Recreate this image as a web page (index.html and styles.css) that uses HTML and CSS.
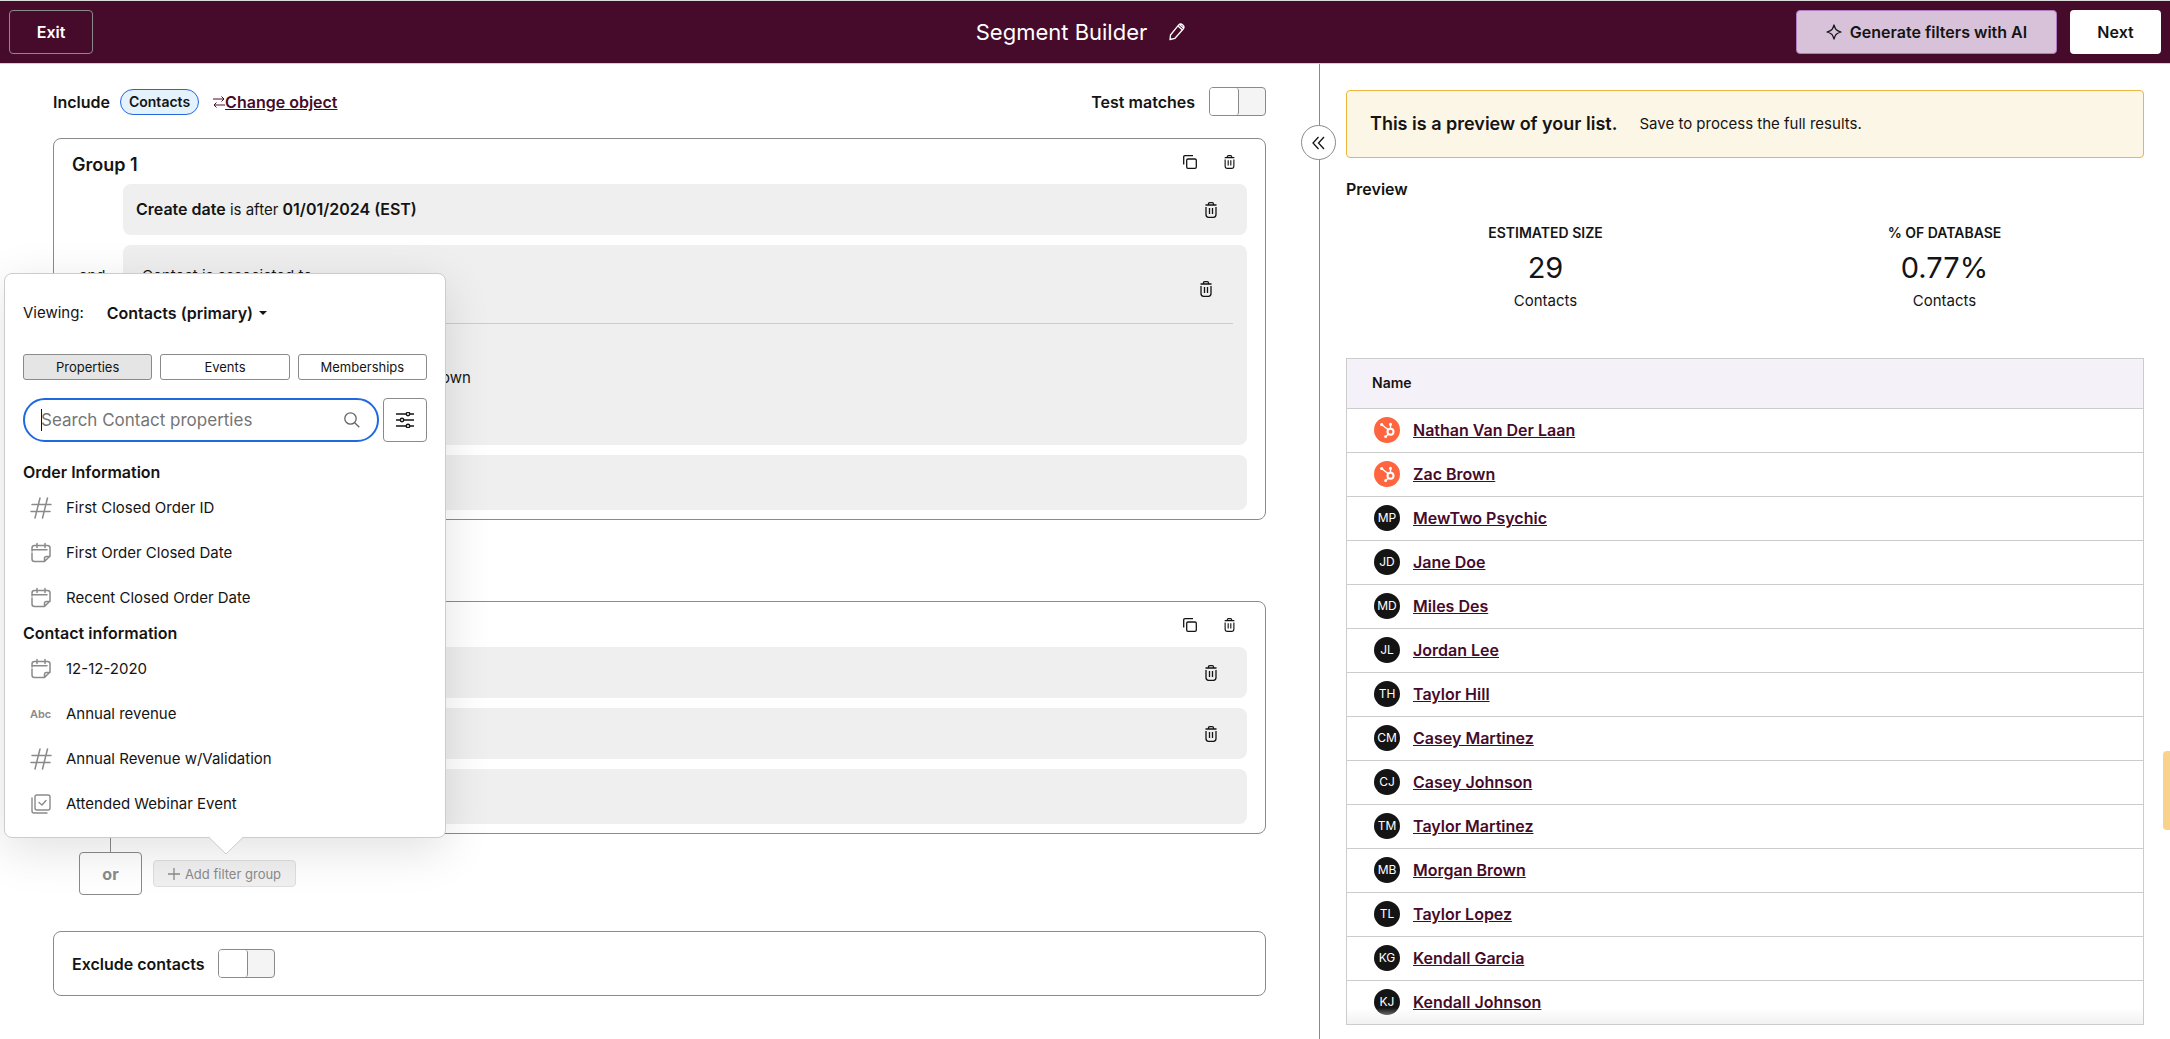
FILE: index.html
```html
<!DOCTYPE html>
<html lang="en">
<head>
<meta charset="utf-8">
<meta name="viewport" content="width=device-width, initial-scale=1">
<title>Segment Builder</title>
<link rel="stylesheet" href="styles.css">
</head>
<body>
<svg class="sprite" aria-hidden="true">
  <symbol id="i-trash" viewBox="0 0 12 16"><path d="M0.5 3H11.500M3.500 3V2Q3.500 0.700 4.800 0.700H7.200Q8.500 0.700 8.500 2V3M1 5V12.500Q1 15.300 3.500 15.300H8.500Q11 15.300 11 12.500V5M4.500 6V12M7.500 6V12" fill="none" stroke="currentColor" stroke-width="1.300"/></symbol>
  <symbol id="i-copy" viewBox="0 0 14 14"><path d="M0.700 9.500V2Q0.700 0.700 2 0.700H10M5 4H12Q13.300 4 13.300 5.300V12Q13.300 13.300 12 13.300H5Q3.700 13.300 3.700 12V5.300Q3.700 4 5 4Z" fill="none" stroke="currentColor" stroke-width="1.300"/></symbol>
  <symbol id="i-hash" viewBox="0 0 22 22"><path d="M2 7.500H21M1 14.500H20M10 1L5 21M17.500 1L12.500 21" fill="none" stroke="currentColor" stroke-width="1.500" stroke-linecap="round"/></symbol>
  <symbol id="i-date" viewBox="0 0 22 22"><path d="M2 9V6Q2 3.500 4.500 3.500H17.500Q20 3.500 20 6V14L14.500 19.500M2 11V17Q2 19.500 4.500 19.500H14.500V16.500Q14.500 14.500 16.500 14.500H20M2 7.800H17M7 1.500V5.500M15 1.500V5.500" fill="none" stroke="currentColor" stroke-width="1.500" stroke-linecap="round" stroke-linejoin="round"/></symbol>
  <symbol id="i-check" viewBox="0 0 22 22"><path d="M7 2H18Q20 2 20 4V15Q20 17 18 17H7Q5 17 5 15V4Q5 2 7 2ZM2 5V18Q2 20 4 20H17M9 9.500L12 12L16 7.500" fill="none" stroke="currentColor" stroke-width="1.400" stroke-linecap="round" stroke-linejoin="round"/></symbol>
  <symbol id="i-hub" viewBox="0 0 26 26"><g fill="none" stroke="#fff" stroke-width="1.400"><circle cx="16.500" cy="14.800" r="3" stroke-width="2"/><path d="M16.500 11.500V7.500M14 12.500L7.500 7.500M14.300 17L12 19.500"/></g><g fill="#fff"><circle cx="16.500" cy="7.300" r="1.500"/><circle cx="7.700" cy="7.500" r="1.600"/><circle cx="11.600" cy="19.700" r="1.400"/></g></symbol>
</svg>

<header class="topbar">
  <button class="btn btn-exit" type="button">Exit</button>
  <div class="title">
    <h1>Segment Builder</h1>
    <button class="icon-btn" type="button" aria-label="Rename">
      <svg width="16" height="18" viewBox="0 0 16 18"><path d="M1 16.500L1.500 12L9.500 2.200Q11.500 0 13.800 2Q16 4 14.200 6L6 15.300ZM9 3L13.500 7M11 2L14.500 5" fill="none" stroke="currentColor" stroke-width="1.300" stroke-linejoin="round"/></svg>
    </button>
  </div>
  <div class="actions">
    <button class="btn btn-ai" type="button">
      <svg width="16" height="16" viewBox="0 0 16 16"><path d="M8 1Q8.800 3.800 10 5.500Q11.500 7 15 8Q11.500 9 10 10.500Q8.800 12.200 8 15Q7.200 12.200 6 10.500Q4.500 9 1 8Q4.500 7 6 5.500Q7.200 3.800 8 1Z" fill="none" stroke="currentColor" stroke-width="1.300" stroke-linejoin="round"/></svg>
      Generate filters with AI
    </button>
    <button class="btn btn-next" type="button">Next</button>
  </div>
</header>

<main class="layout">
  <section class="builder">
    <div class="toolbar">
      <span class="strong">Include</span>
      <span class="pill">Contacts</span>
      <a class="change" href="#object"><svg width="12" height="12" viewBox="0 0 12 12"><path d="M0 3H11M8.500 0.500L11 3L8.500 5.500M12 9H1M3.500 6.500L1 9L3.500 11.500" fill="none" stroke="currentColor"/></svg><span>Change object</span></a>
      <label class="test">Test matches <input class="toggle" type="checkbox"></label>
    </div>

    <section class="group">
      <div class="group-head">
        <h2>Group 1</h2>
        <button class="icon-btn" type="button" aria-label="Clone group"><svg width="14" height="14"><use href="#i-copy"/></svg></button>
        <button class="icon-btn" type="button" aria-label="Delete group"><svg width="11" height="14"><use href="#i-trash"/></svg></button>
      </div>
      <div class="line">
        <div class="rule">
          <p><b>Create date</b> is after <b>01/01/2024 (EST)</b></p>
          <button class="icon-btn" type="button" aria-label="Delete filter"><svg width="12" height="16"><use href="#i-trash"/></svg></button>
        </div>
      </div>
      <div class="line">
        <span class="joiner">and</span>
        <div class="assoc">
          <div class="assoc-head">
            <p>Contact is associated to:</p>
            <button class="icon-btn" type="button" aria-label="Delete association"><svg width="12" height="16"><use href="#i-trash"/></svg></button>
          </div>
          <p class="assoc-value">own</p>
        </div>
      </div>
      <div class="line"><div class="add-area"></div></div>
    </section>

    <section class="group group-second">
      <div class="group-head">
        <button class="icon-btn" type="button" aria-label="Clone group"><svg width="14" height="14"><use href="#i-copy"/></svg></button>
        <button class="icon-btn" type="button" aria-label="Delete group"><svg width="11" height="14"><use href="#i-trash"/></svg></button>
      </div>
      <div class="line"><div class="rule"><button class="icon-btn" type="button" aria-label="Delete filter"><svg width="12" height="16"><use href="#i-trash"/></svg></button></div></div>
      <div class="line"><div class="rule"><button class="icon-btn" type="button" aria-label="Delete filter"><svg width="12" height="16"><use href="#i-trash"/></svg></button></div></div>
      <div class="line"><div class="add-area"></div></div>
    </section>

    <div class="or-row">
      <span class="or">or</span>
      <div class="add-wrap">
        <button class="btn-add" type="button" disabled>
          <svg width="12" height="12" viewBox="0 0 12 12"><path d="M6 0V12M0 6H12" stroke="currentColor" stroke-width="1.300"/></svg>
          Add filter group
        </button>

        <div class="popover" role="dialog" aria-label="Choose a property">
          <div class="viewing">
            <label for="object">Viewing:</label>
            <span class="select">
              <select id="object"><option>Contacts (primary)</option></select>
              <svg width="8" height="4" viewBox="0 0 8 4"><path d="M0 0H8L4 4Z" fill="currentColor"/></svg>
            </span>
          </div>
          <div class="tabs">
            <button class="tab active" type="button">Properties</button>
            <button class="tab" type="button">Events</button>
            <button class="tab" type="button">Memberships</button>
          </div>
          <div class="search-row">
            <div class="search">
              <span class="caret"></span>
              <input type="text" aria-label="Search Contact properties" placeholder="Search Contact properties">
              <svg width="16" height="16" viewBox="0 0 16 16"><circle cx="6.500" cy="6.500" r="5.700" fill="none" stroke="currentColor" stroke-width="1.300"/><path d="M10.700 10.700L15.300 15.300" stroke="currentColor" stroke-width="1.300"/></svg>
            </div>
            <button class="filter-btn" type="button" aria-label="Filter properties">
              <svg width="18" height="16" viewBox="0 0 18 16"><g fill="none" stroke="currentColor" stroke-width="1.400"><path d="M0 2H10M14 2H18M0 8H4M8 8H18M0 14H10M14 14H18"/><circle cx="12" cy="2" r="1.700"/><circle cx="6" cy="8" r="1.700"/><circle cx="12" cy="14" r="1.700"/></g></svg>
            </button>
          </div>
          <h3>Order Information</h3>
          <ul>
            <li><svg width="22" height="22"><use href="#i-hash"/></svg>First Closed Order ID</li>
            <li><svg width="22" height="22"><use href="#i-date"/></svg>First Order Closed Date</li>
            <li><svg width="22" height="22"><use href="#i-date"/></svg>Recent Closed Order Date</li>
          </ul>
          <h3>Contact information</h3>
          <ul>
            <li><svg width="22" height="22"><use href="#i-date"/></svg>12-12-2020</li>
            <li><span class="abc">Abc</span>Annual revenue</li>
            <li><svg width="22" height="22"><use href="#i-hash"/></svg>Annual Revenue w/Validation</li>
            <li><svg width="22" height="22"><use href="#i-check"/></svg>Attended Webinar Event</li>
          </ul>
          <svg class="arrow" width="34" height="18" viewBox="0 0 34 18"><path d="M0 0L17 17L34 0Z" fill="#fff"/><path d="M0 0.500L17 17L34 0.500" fill="none" stroke="#cccccc"/></svg>
        </div>
      </div>
    </div>

    <label class="exclude">Exclude contacts <input class="toggle" type="checkbox"></label>
  </section>

  <section class="preview">
    <button class="collapse" type="button" aria-label="Expand preview">
      <svg width="13" height="14" viewBox="0 0 13 14"><path d="M6.500 1L1 7L6.500 13M12 1L6.500 7L12 13" fill="none" stroke="currentColor" stroke-width="1.300"/></svg>
    </button>
    <div class="notice"><strong>This is a preview of your list.</strong><span>Save to process the full results.</span></div>
    <h2 class="preview-title">Preview</h2>
    <div class="stats">
      <div class="stat"><h3>ESTIMATED SIZE</h3><p class="num">29</p><p>Contacts</p></div>
      <div class="stat"><h3>% OF DATABASE</h3><p class="num">0.77%</p><p>Contacts</p></div>
    </div>
    <div class="table-wrap">
      <table>
        <thead><tr><th scope="col">Name</th></tr></thead>
        <tbody>
          <tr><td><div class="person"><span class="avatar hub"><svg width="26" height="26"><use href="#i-hub"/></svg></span><a href="#c1">Nathan Van Der Laan</a></div></td></tr>
          <tr><td><div class="person"><span class="avatar hub"><svg width="26" height="26"><use href="#i-hub"/></svg></span><a href="#c2">Zac Brown</a></div></td></tr>
          <tr><td><div class="person"><span class="avatar">MP</span><a href="#c3">MewTwo Psychic</a></div></td></tr>
          <tr><td><div class="person"><span class="avatar">JD</span><a href="#c4">Jane Doe</a></div></td></tr>
          <tr><td><div class="person"><span class="avatar">MD</span><a href="#c5">Miles Des</a></div></td></tr>
          <tr><td><div class="person"><span class="avatar">JL</span><a href="#c6">Jordan Lee</a></div></td></tr>
          <tr><td><div class="person"><span class="avatar">TH</span><a href="#c7">Taylor Hill</a></div></td></tr>
          <tr><td><div class="person"><span class="avatar">CM</span><a href="#c8">Casey Martinez</a></div></td></tr>
          <tr><td><div class="person"><span class="avatar">CJ</span><a href="#c9">Casey Johnson</a></div></td></tr>
          <tr><td><div class="person"><span class="avatar">TM</span><a href="#c10">Taylor Martinez</a></div></td></tr>
          <tr><td><div class="person"><span class="avatar">MB</span><a href="#c11">Morgan Brown</a></div></td></tr>
          <tr><td><div class="person"><span class="avatar">TL</span><a href="#c12">Taylor Lopez</a></div></td></tr>
          <tr><td><div class="person"><span class="avatar">KG</span><a href="#c13">Kendall Garcia</a></div></td></tr>
          <tr><td><div class="person"><span class="avatar">KJ</span><a href="#c14">Kendall Johnson</a></div></td></tr>
        </tbody>
      </table>
    </div>
  </section>
</main>
<div class="side-tab"></div>
</body>
</html>
```
FILE: styles.css
```css
* { box-sizing: border-box; }

body {
  margin: 0;
  min-height: 100vh;
  display: flex;
  flex-direction: column;
  background: #fff;
  color: #141414;
  font: 15px/20px Inter, "Liberation Sans", sans-serif;
}

h1, h2, h3, p, ul { margin: 0; padding: 0; }
button, input, select { font: inherit; color: inherit; }
svg { display: block; flex: none; }
.sprite { position: absolute; width: 0; height: 0; }

.icon-btn {
  display: flex;
  padding: 0;
  border: 0;
  background: none;
}

.strong, b { font-size: 16px; font-weight: 600; }

/* Top bar */
.topbar {
  display: grid;
  grid-template-columns: 1fr auto 1fr;
  align-items: center;
  height: 64px;
  padding: 0 9px;
  border-top: 1px solid #dcdcdc;
  border-bottom: 1px solid #d8ccd3;
  background: #460b2a;
  color: #fff;
}

.btn {
  display: flex;
  align-items: center;
  justify-content: center;
  gap: 8px;
  height: 44px;
  padding: 0;
  border: 1px solid transparent;
  border-radius: 4px;
  font-size: 16px;
  font-weight: 600;
}

.btn-exit {
  width: 84px;
  border-color: #8a8a8a;
  background: transparent;
}

.title {
  display: flex;
  align-items: center;
  gap: 22px;
  padding-right: 9px;
}

.title h1 {
  font-size: 22px;
  line-height: 28px;
  font-weight: 400;
}

.actions {
  display: flex;
  justify-content: flex-end;
  gap: 13px;
}

.btn-ai {
  width: 261px;
  border-color: #b07cc0;
  background: #d7c2d9;
  color: #141414;
}

.btn-next {
  width: 91px;
  background: #fff;
  color: #141414;
}

/* Page columns */
.layout {
  flex: 1;
  display: grid;
  grid-template-columns: 1319fr 851fr;
}

.builder { padding: 23px 53px 40px; }

.toolbar {
  display: flex;
  align-items: center;
  height: 29px;
  margin-bottom: 22px;
}

.pill {
  height: 26px;
  margin: 0 14px 0 10px;
  padding: 0 8px;
  border: 1px solid #2567df;
  border-radius: 13px;
  background: #e3f2fb;
  font-size: 14px;
  line-height: 24px;
  font-weight: 600;
}

.change {
  display: flex;
  align-items: center;
  color: #460b2a;
  font-size: 16px;
  font-weight: 600;
  text-decoration: none;
}

.change span { text-decoration: underline; }

.test {
  display: flex;
  align-items: center;
  gap: 14px;
  margin-left: auto;
  font-size: 16px;
  font-weight: 600;
}

.toggle {
  appearance: none;
  width: 57px;
  height: 29px;
  margin: 0;
  border: 1px solid #8a8a8a;
  border-radius: 4px;
  background: #f4f4f4;
}

.toggle::before {
  content: "";
  display: block;
  width: 28px;
  height: 27px;
  border-right: 1px solid #8a8a8a;
  border-radius: 3px;
  background: #fff;
}

/* Filter groups */
.group {
  display: flex;
  flex-direction: column;
  gap: 10px;
  padding: 0 18px 9px 0;
  border: 1px solid #8a8a8a;
  border-radius: 8px;
}

.group-second { margin-top: 81px; }

.group-head {
  display: flex;
  align-items: center;
  justify-content: flex-end;
  gap: 27px;
  height: 45px;
  margin-bottom: -10px;
  padding: 0 12px 0 18px;
}

.group-head h2 {
  margin-right: auto;
  padding-top: 6px;
  font-size: 18px;
  line-height: 22px;
  font-weight: 600;
}

.line {
  display: flex;
  justify-content: flex-end;
}

.joiner {
  flex: 1;
  padding: 21px 0 0 25px;
}

.rule, .assoc, .add-area {
  width: calc(100% - 69px);
  border-radius: 8px;
  background: #efefef;
}

.rule {
  display: flex;
  align-items: center;
  height: 51px;
  padding: 0 30px 0 13px;
}

.rule .icon-btn { margin-left: auto; }

.assoc {
  height: 200px;
  padding: 0 14px 0 19px;
}

.assoc-head {
  display: flex;
  align-items: center;
  justify-content: space-between;
  height: 79px;
  padding: 10px 21px 0 0;
  border-bottom: 1px solid #cccccc;
}

.assoc-head p {
  align-self: flex-start;
  padding-top: 11px;
}

.assoc-value { padding: 44px 0 0 299px; }

.add-area { height: 55px; }

/* Or row */
.or-row {
  display: flex;
  align-items: center;
  gap: 11px;
  margin: 18px 0 36px 26px;
}

.or {
  position: relative;
  width: 63px;
  height: 43px;
  border: 1px solid #8a8a8a;
  border-radius: 4px;
  color: #8a8a8a;
  font-size: 16px;
  line-height: 42px;
  font-weight: 700;
  text-align: center;
}

.or::before {
  content: "";
  position: absolute;
  left: 30px;
  bottom: 100%;
  height: 18px;
  border-left: 1px solid #8a8a8a;
}

.add-wrap { position: relative; }

.btn-add {
  display: flex;
  align-items: center;
  justify-content: center;
  gap: 5px;
  width: 143px;
  height: 27px;
  padding: 0;
  border: 1px solid #dedede;
  border-radius: 4px;
  background: #f0f0f0;
  color: #8a8a8a;
  font-size: 13px;
}

.exclude {
  display: flex;
  align-items: center;
  gap: 13px;
  height: 65px;
  padding: 0 18px;
  border: 1px solid #8a8a8a;
  border-radius: 8px;
  font-size: 16px;
  font-weight: 600;
}

/* Property picker */
.popover {
  position: absolute;
  left: -149px;
  bottom: 49px;
  z-index: 2;
  width: 442px;
  padding: 29px 18px 11px;
  border: 1px solid #cccccc;
  border-radius: 8px;
  background: #fff;
  box-shadow: 0 12px 48px rgba(0, 0, 0, 0.12);
}

.viewing {
  display: flex;
  gap: 23px;
  margin-bottom: 31px;
}

.select {
  display: flex;
  align-items: center;
  gap: 5px;
}

.select select {
  appearance: none;
  height: 20px;
  padding: 0;
  border: 0;
  background: none;
  font-size: 16px;
  font-weight: 600;
}

.tabs {
  display: grid;
  grid-template-columns: 1fr 1fr 1fr;
  gap: 8px;
  margin-bottom: 18px;
}

.tab {
  height: 26px;
  padding: 0;
  border: 1px solid #8a8a8a;
  border-radius: 3px;
  background: #fff;
  font-size: 13px;
  line-height: 22px;
}

.tab.active { background: #e5e5e5; }

.search-row {
  display: flex;
  gap: 4px;
  margin-bottom: 17px;
}

.search {
  position: relative;
  flex: 1;
  display: flex;
  align-items: center;
  height: 44px;
  padding: 0 17px 0 16px;
  border: 2px solid #1f69e0;
  border-radius: 22px;
  color: #666;
}

.search input {
  flex: 1;
  min-width: 0;
  padding: 0;
  border: 0;
  outline: 0;
  background: none;
  font-size: 17px;
  line-height: 24px;
}

.search input::placeholder { color: #757575; }

.caret {
  position: absolute;
  left: 16px;
  width: 1px;
  height: 22px;
  background: #141414;
}

.filter-btn {
  display: flex;
  align-items: center;
  justify-content: center;
  width: 44px;
  height: 44px;
  padding: 0;
  border: 1px solid #8a8a8a;
  border-radius: 4px;
  background: #fff;
}

.popover h3 {
  font-size: 16px;
  line-height: 26px;
  font-weight: 600;
}

.popover li {
  display: flex;
  align-items: center;
  gap: 14px;
  height: 45px;
  padding-left: 7px;
}

.popover li svg { color: #8a8a8a; }

.abc {
  width: 22px;
  color: #8a8a8a;
  font-size: 11px;
  font-weight: 600;
}

.arrow {
  position: absolute;
  top: 100%;
  left: 204px;
}

/* Preview panel */
.preview {
  position: relative;
  padding: 26px 26px 0;
  border-left: 1px solid #8a8a8a;
}

.collapse {
  position: absolute;
  top: 61px;
  left: -19px;
  display: flex;
  align-items: center;
  justify-content: center;
  width: 35px;
  height: 35px;
  padding: 0;
  border: 1px solid #8a8a8a;
  border-radius: 50%;
  background: #fff;
}

.notice {
  display: flex;
  align-items: center;
  gap: 22px;
  height: 68px;
  padding: 0 23px;
  border: 1px solid #edb73f;
  border-radius: 4px;
  background: #fcf6e6;
}

.notice strong {
  font-size: 18px;
  font-weight: 600;
}

.preview-title {
  margin: 21px 0 24px;
  font-size: 16px;
  line-height: 20px;
  font-weight: 600;
}

.stats {
  display: grid;
  grid-template-columns: 1fr 1fr;
  margin-bottom: 47px;
  text-align: center;
}

.stat h3 {
  font-size: 14px;
  line-height: 20px;
  font-weight: 600;
}

.num {
  padding: 9px 0 7px;
  font-size: 29px;
  line-height: 32px;
}

.table-wrap {
  position: relative;
  border: 1px solid #cccccc;
}

.table-wrap::after {
  content: "";
  position: absolute;
  left: 0;
  right: 0;
  bottom: 0;
  height: 16px;
  background: linear-gradient(rgba(240, 240, 240, 0), rgba(240, 240, 240, 0.9));
}

table {
  width: 100%;
  border-collapse: collapse;
}

th {
  height: 49px;
  padding: 0 25px;
  background: #f5f1f8;
  font-size: 14px;
  font-weight: 600;
  text-align: left;
}

td {
  height: 44px;
  padding: 0 27px;
  border-top: 1px solid #cccccc;
}

.person {
  display: flex;
  align-items: center;
  gap: 13px;
}

.person a {
  color: #460b2a;
  font-size: 16px;
  font-weight: 600;
}

.avatar {
  width: 26px;
  height: 26px;
  border-radius: 50%;
  background: #141414;
  color: #fff;
  font-size: 12px;
  line-height: 26px;
  text-align: center;
}

.avatar.hub { background: #ff6640; }

.side-tab {
  position: fixed;
  right: 0;
  bottom: 209px;
  width: 7px;
  height: 79px;
  border-radius: 4px 0 0 4px;
  background: #f9d28b;
}
```
